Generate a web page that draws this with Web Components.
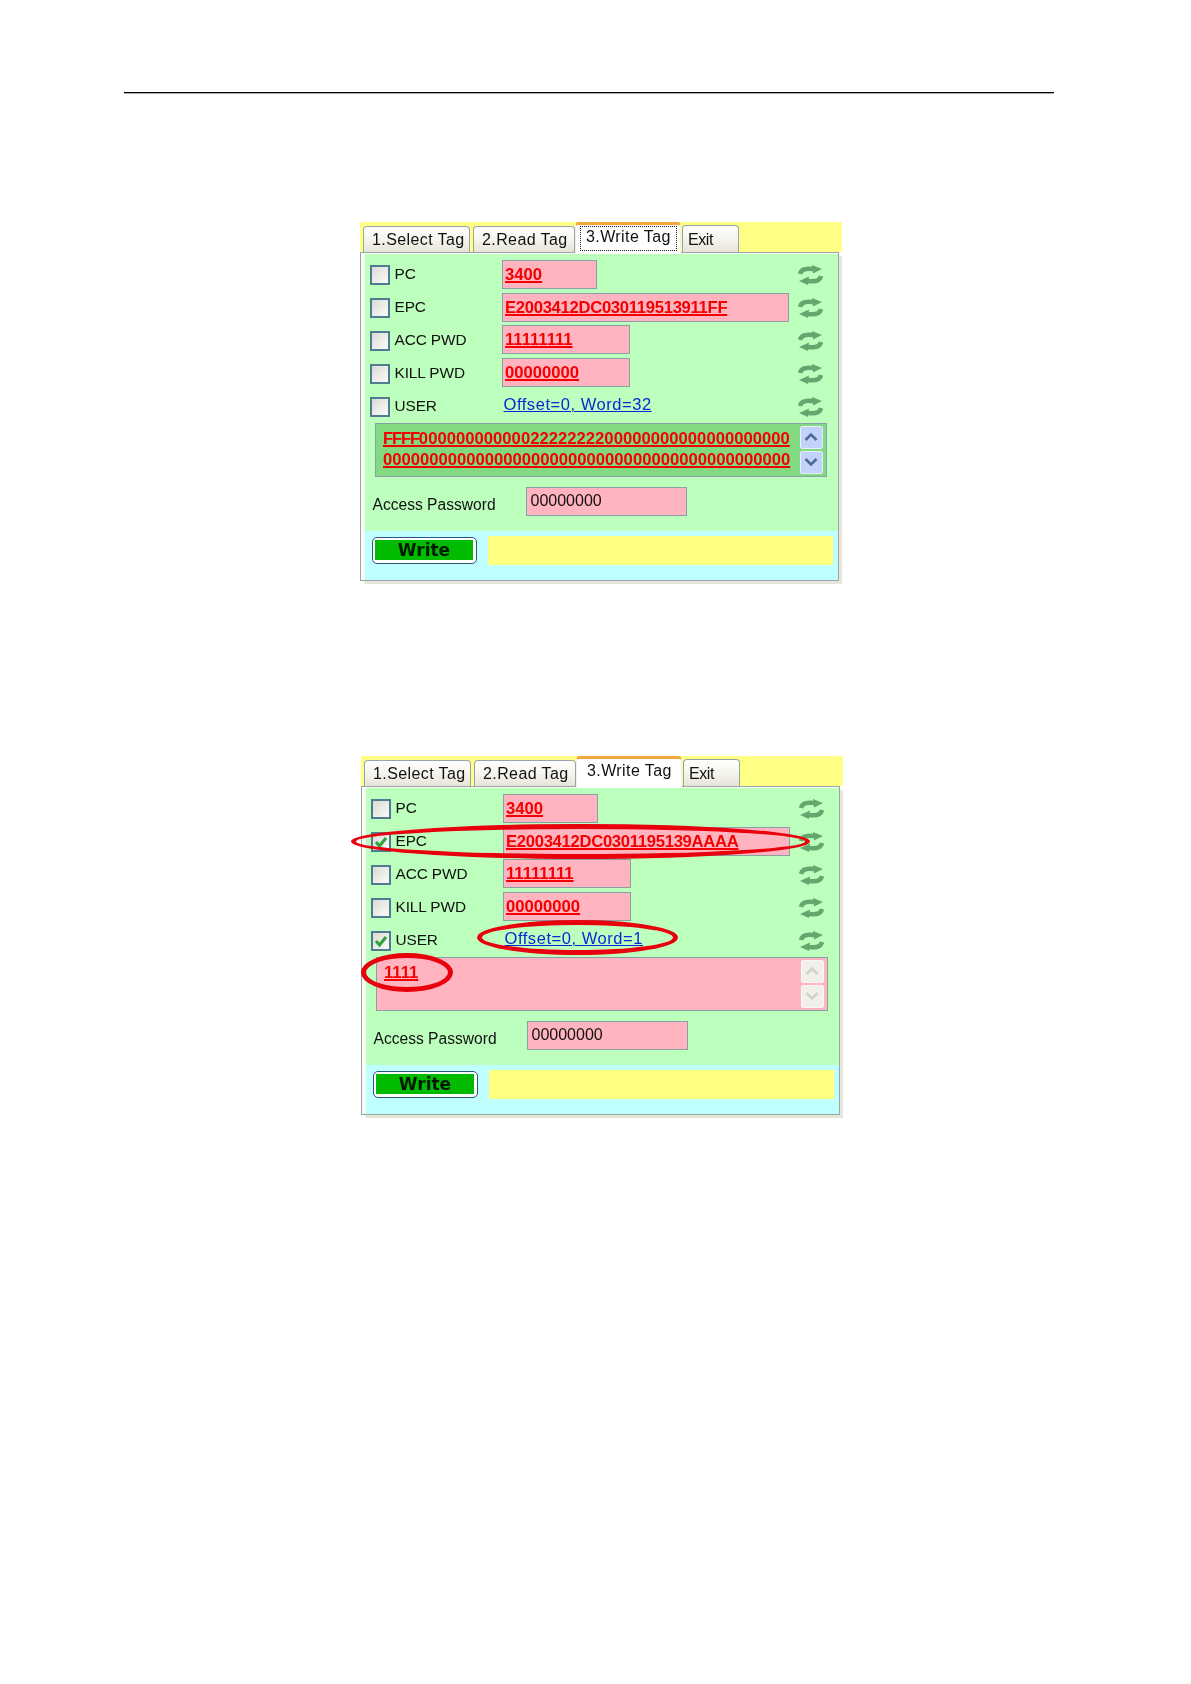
<!DOCTYPE html>
<html>
<head>
<meta charset="utf-8">
<title>Write Tag</title>
<style>
html, body { margin: 0; background: #fff; }
body { font-family: "Liberation Sans", Arial, sans-serif; }
</style>
</head>
<body>
<doc-page>
  <tag-panel focus>
    <tag-row label="PC" value="3400" width="95"></tag-row>
    <tag-row label="EPC" value="E2003412DC030119513911FF" width="287" tight></tag-row>
    <tag-row label="ACC PWD" value="11111111" width="128"></tag-row>
    <tag-row label="KILL PWD" value="00000000" width="128"></tag-row>
    <tag-row label="USER" value="Offset=0, Word=32" link></tag-row>
    <tag-memo active>
      <div><span style="letter-spacing:-1.2px">FFFF</span><span style="letter-spacing:.02px">0000000000002222222200000000000000000000</span></div>
      <div>00000000000000000000000000000000000000000000</div>
    </tag-memo>
  </tag-panel>
  <tag-panel shift>
    <tag-row label="PC" value="3400" width="95"></tag-row>
    <tag-row label="EPC" value="E2003412DC0301195139AAAA" width="287" tight checked></tag-row>
    <tag-row label="ACC PWD" value="11111111" width="128"></tag-row>
    <tag-row label="KILL PWD" value="00000000" width="128"></tag-row>
    <tag-row label="USER" value="Offset=0, Word=1" link checked></tag-row>
    <tag-memo>
      <div>1111</div>
    </tag-memo>
    <red-ring slot="marks" x="-10" y="68" w="459" h="35"></red-ring>
    <red-ring slot="marks" x="116" y="164" w="201" h="35"></red-ring>
    <red-ring slot="marks" x="0" y="197" w="92" h="39"></red-ring>
  </tag-panel>
</doc-page>

<script>
const pageTemplate = document.createElement('template');
pageTemplate.innerHTML = `
<style>
:host { display: block; width: 1191px; height: 1684px; padding-top: 92px; box-sizing: border-box; overflow: hidden; }
.rule { height: 1px; width: 930px; margin-left: 124px; background: #000; box-shadow: 0 1px 0 #aaa; }
.sheet { display: flex; flex-direction: column; gap: 174px; margin: 129px 0 0 360px; }
</style>
<div class="rule"></div>
<div class="sheet"><slot></slot></div>
`;

class DocPage extends HTMLElement {
    constructor() {
        super();
        this.attachShadow({mode: 'open'}).appendChild(pageTemplate.content.cloneNode(true));
    }
}

const panelTemplate = document.createElement('template');
panelTemplate.innerHTML = `
<style>
:host { display: block; position: relative; width: 482px; height: 360px; color: #111;
    font: 16px "Liberation Sans", Arial, sans-serif; filter: blur(.35px); }
:host([shift]) { margin-left: 1px; }
.strip { display: flex; align-items: flex-end; height: 30px; padding-left: 3px; box-sizing: border-box; background: #ffff85; }
.tab { box-sizing: border-box; height: 26px; padding: 4px 0 0 8px; white-space: nowrap; letter-spacing: .4px;
    border: 1px solid #98a3a8; border-bottom: none; border-radius: 4px 4px 0 0;
    background: linear-gradient(#fff, #f4f3ec 55%, #e6e4d8); }
.tab.one { width: 107px; }
.tab.two { width: 102px; margin-left: 3px; }
.tab.three { position: relative; z-index: 1; width: 106px; height: 32px; margin: 0 0 -2px 0; padding: 3px 0 0 10px;
    background: #fff; border: 1px solid #f0f0f0; border-bottom: none; border-top: 3px solid #f2a73a; }
.tab.exit { width: 57px; height: 27px; margin-left: 1px; padding: 5px 0 0 5px; font-size: 16px; letter-spacing: -.4px; }
.focus { position: absolute; left: 4px; right: 3px; top: 1px; bottom: 3px; border: 1.5px dotted #222; display: none; }
:host([focus]) .focus { display: block; }
.body { box-sizing: border-box; width: 478.5px; height: 328.5px; display: flex; flex-direction: column;
    border: 1.5px solid #9aa5aa; background: #f6fbf4;
    box-shadow: 2.5px 2.5px 1px #e6e6da; padding: 1px 0 0 3.5px; }
.green { flex: 1; background: #bdffbd; padding: 5.75px 0 0 5px; box-sizing: border-box; }
.rows { display: grid; grid-auto-rows: 29px; row-gap: 3.75px; }
.access { display: grid; grid-template-columns: 153px 161px; margin: 1.5px 0 0 3px; height: 29px; }
.access span { padding-top: 8px; font-size: 15.6px; line-height: 20px; }
.access b { font-weight: normal; box-sizing: border-box; background: #ffb4bf; border: 1.5px solid #8aa0a6;
    padding-left: 4px; line-height: 26px; font-size: 16px; }
.foot { height: 48.5px; box-sizing: border-box; padding: 4.5px 5px 0 7px; background: #c0ffff; display: flex; gap: 11px; align-items: flex-start; }
.write { box-sizing: border-box; width: 105px; height: 27px; margin-top: 1px; padding: 2.5px; border: 1.5px solid #2e5478;
    border-radius: 5px; background: #fff; }
.write div { height: 100%; background: #00bb00; display: flex; align-items: center; justify-content: center;
    font: bold 17px "DejaVu Sans", Verdana, sans-serif; color: #001a00; }
.note { flex: 1; height: 29px; background: #ffff80; }
</style>
<div class="strip">
  <div class="tab one">1.Select Tag</div>
  <div class="tab two">2.Read Tag</div>
  <div class="tab three">3.Write Tag<div class="focus"></div></div>
  <div class="tab exit">Exit</div>
</div>
<div class="body">
  <div class="green">
    <div class="rows"><slot></slot></div>
    <div class="access"><span>Access Password</span><b>00000000</b></div>
  </div>
  <div class="foot">
    <div class="write"><div>Write</div></div>
    <div class="note"></div>
  </div>
</div>
<slot name="marks"></slot>
`;

class TagPanel extends HTMLElement {
    constructor() {
        super();
        this.attachShadow({mode: 'open'}).appendChild(panelTemplate.content.cloneNode(true));
    }
}

const rowTemplate = document.createElement('template');
rowTemplate.innerHTML = `
<style>
:host { display: grid; grid-template-columns: 20px 102px 1fr 25px; column-gap: 5px; align-items: center; padding-right: 15px; height: 29px; }
.box { box-sizing: border-box; width: 20px; height: 20px; margin-top: 2px; border: 2px solid #4f7c93;
    background: linear-gradient(135deg, #dcdcd6, #fafaf8); display: flex; align-items: center; justify-content: center; }
.box svg { display: none; }
:host([checked]) .box svg { display: block; }
.label { font-size: 15.4px; letter-spacing: -.1px; white-space: nowrap; }
.val { box-sizing: border-box; height: 29px; padding-left: 2.5px; background: #ffb4bf; border: 1.5px solid #8aa0a6;
    color: #f40000; font: bold 16.65px/27px "Liberation Sans", Arial, sans-serif; text-decoration: underline; text-decoration-thickness: 2px; white-space: nowrap; }
:host([tight]) .val { letter-spacing: -.3px; }
:host([link]) .val { background: none; border: none; color: #0a28d8; padding-left: 2px; margin-top: 1px;
    font: 16.5px/25px "Liberation Sans", Arial, sans-serif; letter-spacing: .55px; text-decoration-thickness: 1px; }
svg.turn { display: block; margin-top: 2px; filter: blur(.5px); }
</style>
<div class="box"><svg width="14" height="14" viewBox="0 0 14 14"><path d="M2 7l3.5 4L12 3" fill="none" stroke="#2aa53a" stroke-width="3"/></svg></div>
<div class="label"></div>
<div><div class="val"></div></div>
<svg class="turn" width="25" height="22" viewBox="0 0 25 22">
  <g fill="none" stroke="#63a66e" stroke-width="4.5">
    <path d="M2 10C3 5 8 4 15 5"/>
    <path d="M23 12C22 17 17 18 10 17"/>
  </g>
  <path d="M14 1L24 5 15 9.500ZM11 12.500L1 17 10 21Z" fill="#63a66e"/>
</svg>
`;

class TagRow extends HTMLElement {
    constructor() {
        super();
        this.root = this.attachShadow({mode: 'open'});
        this.root.appendChild(rowTemplate.content.cloneNode(true));
    }

    connectedCallback() {
        this.root.querySelector('.label').textContent = this.getAttribute('label');
        const val = this.root.querySelector('.val');
        val.textContent = this.getAttribute('value');
        if (this.hasAttribute('width')) val.style.width = this.getAttribute('width') + 'px';
    }
}

const memoTemplate = document.createElement('template');
memoTemplate.innerHTML = `
<style>
:host { display: grid; grid-template-columns: 1fr 23px; box-sizing: border-box; width: 452px; height: 54px; margin: -1px 0 0 5px;
    grid-row: span 2; align-self: start; padding: 2px 3px 0 7.500px; background: #ffb4bf; border: 1.5px solid #8aa0a6; }
:host([active]) { background: #82d982; }
.text { padding-top: 2px; color: #f40000; font: bold 16.65px/21px "Liberation Sans", Arial, sans-serif;
    text-decoration: underline; text-decoration-thickness: 2px; white-space: nowrap; }
.bar { display: flex; flex-direction: column; gap: 2px; }
.btn { width: 23px; height: 23px; box-sizing: border-box; display: flex; align-items: center; justify-content: center;
    background: #f0efe9; border: 1px solid #f8f8f4; border-radius: 2px; }
:host([active]) .btn { background: #c3d2f8; border-color: #e6edfb; }
.btn path { fill: none; stroke: #d2d2cc; stroke-width: 2.6; }
:host([active]) .btn path { stroke: #4d6a96; }
</style>
<div class="text"><slot></slot></div>
<div class="bar">
  <div class="btn"><svg width="14" height="10" viewBox="0 0 14 10"><path d="M1.500 8L7 2.500 12.500 8"/></svg></div>
  <div class="btn"><svg width="14" height="10" viewBox="0 0 14 10"><path d="M1.500 2L7 7.500 12.500 2"/></svg></div>
</div>
`;

class TagMemo extends HTMLElement {
    constructor() {
        super();
        this.attachShadow({mode: 'open'}).appendChild(memoTemplate.content.cloneNode(true));
    }
}

const ringTemplate = document.createElement('template');
ringTemplate.innerHTML = `
<style>
:host { display: block; position: absolute; box-sizing: border-box; border: 5px solid #e8000c; border-radius: 50%; }
</style>
`;

class RedRing extends HTMLElement {
    constructor() {
        super();
        this.attachShadow({mode: 'open'}).appendChild(ringTemplate.content.cloneNode(true));
    }

    connectedCallback() {
        this.style.left = this.getAttribute('x') + 'px';
        this.style.top = this.getAttribute('y') + 'px';
        this.style.width = this.getAttribute('w') + 'px';
        this.style.height = this.getAttribute('h') + 'px';
    }
}

customElements.define('doc-page', DocPage);
customElements.define('tag-panel', TagPanel);
customElements.define('tag-row', TagRow);
customElements.define('tag-memo', TagMemo);
customElements.define('red-ring', RedRing);
</script>
</body>
</html>
